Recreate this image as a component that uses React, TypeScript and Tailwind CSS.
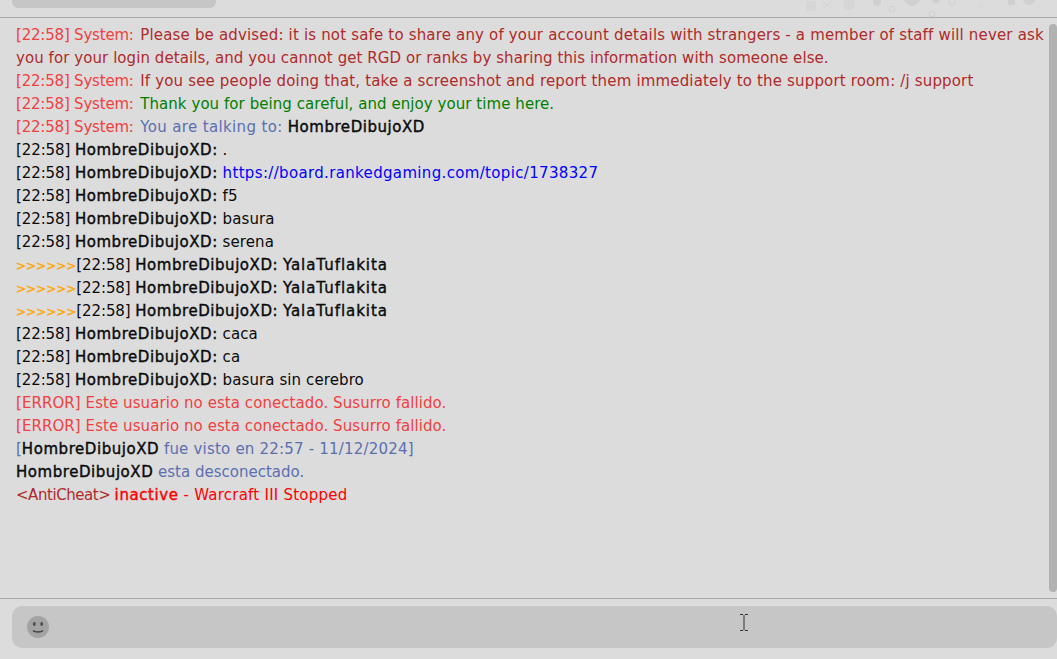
const Sys = () => <span className="mr-[2px] tracking-[-0.2px] text-[#f23f3f]">[22:58] System: </span>;
const Name = ({ children }: { children: React.ReactNode }) => (
  <span className="tracking-[0.55px] text-[#0a0a0a] [-webkit-text-stroke:0.4px_#0a0a0a]">{children}</span>
);
const Stamp = () => <span className="tracking-[-0.1px]">[22:58] </span>;
const Msg = ({ text, arrows }: { text: string; arrows?: boolean }) => (
  <div className="text-[#0a0a0a]">
    {arrows && (
      <span className="text-[12px] leading-none text-[#ffa500] [-webkit-text-stroke:0.3px_#ffa500]">{">>>>>>"}</span>
    )}
    <Stamp />
    <Name>HombreDibujoXD:</Name>{" "}
    {arrows ? (
      <span className="tracking-[0.95px] [-webkit-text-stroke:0.4px_#0a0a0a]">{text}</span>
    ) : (
      <span className="tracking-[0.1px]">{text}</span>
    )}
  </div>
);

const App = () => {
  return (
    <div
      className="flex h-[659px] w-[1057px] flex-col overflow-hidden bg-[#dcdcdc] pl-3 text-[15px] leading-[23px]"
      style={{ fontFamily: '"DejaVu Sans", Tahoma, sans-serif' }}
    >
      {/* barra superior */}
      <div className="relative -ml-3 h-[18px] shrink-0 border-b border-[#aaaaaa] pl-3">
        <div className="h-[8px] w-[204px] rounded-b-md bg-[#c6c6c6]" />
        <svg className="absolute left-[800px] top-0" width="257" height="17" viewBox="0 0 257 17" fill="#d6d6d6">
          <rect x="6" y="1" width="10" height="10" rx="2" />
          <path d="M22 1l10 8M32 1l-10 8" stroke="#d6d6d6" strokeWidth="1.5" />
          <circle cx="49" cy="4" r="6" />
          <circle cx="77" cy="2" r="4" fill="#d0d0d0" />
          <circle cx="92" cy="9" r="3" fill="none" stroke="#d0d0d0" />
          <circle cx="112" cy="-2" r="8" fill="#d0d0d0" />
          <circle cx="136" cy="0" r="3.5" fill="#d0d0d0" />
          <circle cx="152" cy="2" r="3" fill="none" stroke="#d0d0d0" />
          <circle cx="132" cy="14" r="3" fill="none" stroke="#d0d0d0" />
          <path d="M181 3v6M178 6h6" stroke="#d6d6d6" />
          <rect x="208" y="0" width="7" height="5" fill="#d0d0d0" />
          <circle cx="229" cy="-1" r="6" fill="#d0d0d0" />
        </svg>
      </div>

      {/* mensajes */}
      <div className="flex min-h-0 flex-1">
        <div className="flex-1 pl-1 pt-[6px] pr-1">
          <div className="text-[#b02a2a]">
            <Sys />
            <span className="tracking-[0.17px]">
              Please be advised: it is not safe to share any of your account details with strangers - a member of staff will never ask{" "}
            </span>
            <span className="tracking-[0.07px]">
              you for your login details, and you cannot get RGD or ranks by sharing this information with someone else.
            </span>
          </div>
          <div className="text-[#b02a2a]">
            <Sys />
            <span className="tracking-[0.16px]">
              If you see people doing that, take a screenshot and report them immediately to the support room: /j support
            </span>
          </div>
          <div className="text-[#008000]">
            <Sys />
            <span className="tracking-[0.06px]">Thank you for being careful, and enjoy your time here.</span>
          </div>
          <div className="text-[#5b6fb0]">
            <Sys />
            <span className="tracking-[0.35px]">You are talking to: </span>
            <Name>HombreDibujoXD</Name>
          </div>
          <Msg text="." />
          <div className="text-[#0a0a0a]">
            <Stamp />
            <Name>HombreDibujoXD:</Name>{" "}
            <span className="tracking-[0.34px] text-[#0000ff]">https://board.rankedgaming.com/topic/1738327</span>
          </div>
          <Msg text="f5" />
          <Msg text="basura" />
          <Msg text="serena" />
          <Msg text="YalaTuflakita" arrows />
          <Msg text="YalaTuflakita" arrows />
          <Msg text="YalaTuflakita" arrows />
          <Msg text="caca" />
          <Msg text="ca" />
          <Msg text="basura sin cerebro" />
          <div className="tracking-[0.07px] text-[#f23f3f]">[ERROR] Este usuario no esta conectado. Susurro fallido.</div>
          <div className="tracking-[0.07px] text-[#f23f3f]">[ERROR] Este usuario no esta conectado. Susurro fallido.</div>
          <div className="text-[#5b6fb0]">
            [<Name>HombreDibujoXD</Name> <span className="tracking-[0.2px]">fue visto en 22:57 - 11/12/2024]</span>
          </div>
          <div className="text-[#5b6fb0]">
            <Name>HombreDibujoXD</Name> esta desconectado.
          </div>
          <div className="text-[#b02a2a]">
            <span className="tracking-[-0.45px]">{"<AntiCheat> "}</span>
            <span className="text-[#ff0000]">
              <span className="tracking-[0.6px] [-webkit-text-stroke:0.4px_#ff0000]">inactive</span>{" "}
              <span className="tracking-[0.24px]">- Warcraft III Stopped</span>
            </span>
          </div>
        </div>
        <div className="mt-[6px] mb-[6px] w-[8px] shrink-0 rounded bg-[#b2b2b2]" />
      </div>

      {/* input */}
      <div className="-ml-3 shrink-0 border-t border-[#aaaaaa] pl-3 pt-[7px] pb-[11px]">
        <div className="relative flex h-[42px] items-center rounded-[10px] bg-[#c6c6c6] pl-[15px]">
          <svg width="22" height="22" viewBox="0 0 22 22">
            <circle cx="11" cy="11" r="11" fill="#a3a3a3" />
            <ellipse cx="7.3" cy="8" rx="1.4" ry="2" fill="#4d4d4d" />
            <ellipse cx="14.7" cy="8" rx="1.4" ry="2" fill="#4d4d4d" />
            <path d="M6 14.5c2 2 8 2 10 0" fill="none" stroke="#3f3f3f" strokeWidth="1.6" />
          </svg>
          <svg className="absolute left-[728px] top-[8px]" width="8" height="17" viewBox="0 0 8 17">
            <path d="M0 .5h3M5 .5h3M4 1v15M0 16.5h3M5 16.5h3" stroke="#333" fill="none" />
          </svg>
        </div>
      </div>
    </div>
  );
};

export default App;
